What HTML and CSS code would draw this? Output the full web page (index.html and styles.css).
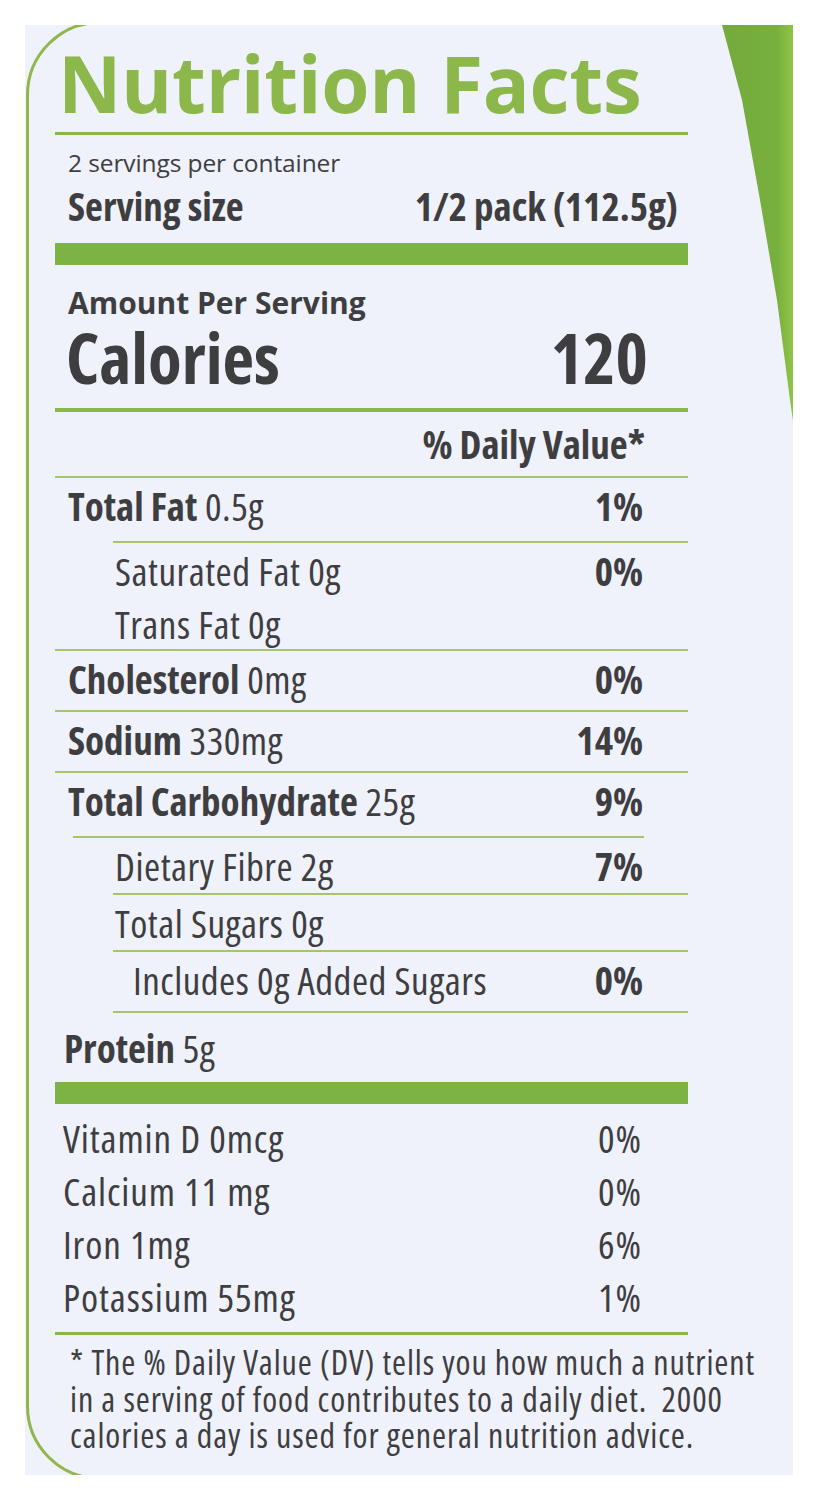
FILE: index.html
```html
<!DOCTYPE html>
<html lang="en">
<head>
<meta charset="utf-8">
<title>Nutrition Facts</title>
<link rel="stylesheet" href="styles.css">
</head>
<body>
<div class="panel">
  <div class="corner"></div>
  <div class="band"></div>
  <div class="label">
    <h1 class="title">Nutrition Facts</h1>
    <div class="rule rule--title"></div>
    <p class="servings">2 servings per container</p>
    <div class="serving"><span>Serving size</span><span>1/2 pack (112.5g)</span></div>
    <div class="bar"></div>
    <p class="amount">Amount Per Serving</p>
    <div class="calories"><span>Calories</span><span>120</span></div>
    <div class="rule rule--thick"></div>
    <div class="dv">% Daily Value*</div>
    <div class="rule rule--after-dv"></div>

    <div class="row row--tall"><span><b>Total Fat</b> 0.5g</span><b>1%</b></div>
    <div class="rule rule--indent"></div>
    <div class="row row--sub row--indent"><span>Saturated Fat 0g</span><b>0%</b></div>
    <div class="row row--sub row--indent"><span>Trans Fat 0g</span></div>
    <div class="rule"></div>
    <div class="row"><span><b>Cholesterol</b> 0mg</span><b>0%</b></div>
    <div class="rule"></div>
    <div class="row"><span><b>Sodium</b> 330mg</span><b>14%</b></div>
    <div class="rule"></div>
    <div class="row row--tall"><span><b>Total Carbohydrate</b> 25g</span><b>9%</b></div>
    <div class="rule rule--short"></div>
    <div class="row row--mid row--indent"><span>Dietary Fibre 2g</span><b>7%</b></div>
    <div class="rule rule--indent"></div>
    <div class="row row--mid row--indent"><span>Total Sugars 0g</span></div>
    <div class="rule rule--indent"></div>
    <div class="row row--deep"><span>Includes 0g Added Sugars</span><b>0%</b></div>
    <div class="rule rule--indent"></div>
    <div class="row row--protein"><span><b>Protein</b> 5g</span></div>
    <div class="bar bar--wide"></div>

    <div class="vitamins">
      <div class="vit"><span>Vitamin D 0mcg</span><span>0%</span></div>
      <div class="vit"><span>Calcium 11 mg</span><span>0%</span></div>
      <div class="vit"><span>Iron 1mg</span><span>6%</span></div>
      <div class="vit"><span>Potassium 55mg</span><span>1%</span></div>
    </div>
    <div class="rule rule--foot"></div>
    <p class="foot"><span>* The % Daily Value (DV) tells you how much a nutrient</span><span>in a serving of food contributes to a daily diet.&nbsp; 2000</span><span>calories a day is used for general nutrition advice.</span></p>
  </div>
</div>
</body>
</html>
```
FILE: styles.css
```css
html, body {
  margin: 0;
  padding: 0;
  background: #ffffff;
}

.panel {
  position: relative;
  box-sizing: border-box;
  width: 768px;
  height: 1450px;
  margin: 25px 0 0 25px;
  padding-top: 19px;
  background: #eff1fb;
  overflow: hidden;
}

.corner {
  position: absolute;
  left: 1px;
  top: -4px;
  width: 900px;
  height: 1459px;
  box-sizing: border-box;
  border: 3px solid #8fb74c;
  border-radius: 74px;
}

.band {
  position: absolute;
  top: 0;
  left: 696px;
  width: 72px;
  height: 396px;
  background: linear-gradient(to right, #73aa3c 0%, #78b03e 78%, #8fc446 100%);
  clip-path: polygon(1px 0, 72px 0, 72px 396px, 69px 375px, 56px 275px, 39px 175px, 21px 75px);
}

.label {
  position: relative;
  width: 633px;
  margin-left: 30px;
  color: #3e3e41;
  font-family: "Open Sans", "Noto Sans", sans-serif;
  font-stretch: 75%;
}

.label b,
.serving,
.amount,
.calories,
.dv {
  font-weight: 700;
}

.title {
  margin: 0;
  padding-left: 3px;
  font-size: 78px;
  line-height: 78px;
  font-weight: 700;
  font-stretch: 100%;
  letter-spacing: -0.3px;
  color: #8cb84b;
}

.rule {
  height: 2px;
  background: #a6c46a;
}

.rule--title {
  height: 3px;
  margin-top: 10px;
  background: #8ab64a;
}

.rule--thick {
  height: 4px;
  margin-top: 16px;
  background: #8ab64a;
}

.rule--after-dv {
  margin-top: 13px;
}

.rule--indent {
  margin-left: 58px;
}

.rule--short {
  margin-left: 18px;
  margin-right: 44px;
}

.rule--foot {
  height: 3px;
  margin-top: 9px;
  background: #8ab64a;
}

.servings {
  margin: 15px 0 0;
  padding-left: 13px;
  font-size: 24.5px;
  line-height: 26px;
  font-stretch: 100%;
  letter-spacing: -0.1px;
}

.serving {
  display: flex;
  justify-content: space-between;
  margin-top: 10px;
  padding: 0 10px 0 13px;
  font-size: 39px;
  line-height: 39px;
}

.bar {
  height: 22px;
  margin-top: 18px;
  background: #7db244;
}

.bar--wide {
  margin-top: 0;
}

.amount {
  margin: 22px 0 0;
  padding-left: 13px;
  font-size: 30px;
  line-height: 31px;
  font-stretch: 100%;
}

.calories {
  display: flex;
  justify-content: space-between;
  margin-top: 5px;
  padding: 0 40px 0 11px;
  font-size: 69px;
  line-height: 69px;
}

.dv {
  margin-top: 12px;
  padding-right: 43px;
  text-align: right;
  font-size: 39px;
  line-height: 39px;
}

.row {
  display: flex;
  justify-content: space-between;
  align-items: baseline;
  box-sizing: border-box;
  height: 59px;
  padding: 8px 45px 0 13px;
  font-size: 39px;
  line-height: 39px;
  letter-spacing: 0.5px;
}

.row b {
  letter-spacing: 0;
}

.row--tall { height: 63px; }
.row--sub { height: 53px; }
.row--mid { height: 55px; }
.row--indent { padding-left: 60px; }
.row--deep { padding-left: 78px; }
.row--protein {
  height: 69px;
  padding-top: 15px;
  padding-left: 9px;
}

.vitamins {
  padding-top: 7px;
}

.vit {
  display: flex;
  justify-content: space-between;
  box-sizing: border-box;
  height: 53px;
  padding: 8px 46px 0 8px;
  font-size: 39px;
  line-height: 38px;
  letter-spacing: 0.9px;
}

.foot {
  display: flex;
  flex-direction: column;
  margin: 9px 0 0;
  padding-left: 15px;
  font-size: 34px;
  line-height: 36.5px;
  letter-spacing: 0.9px;
  white-space: nowrap;
}
```
